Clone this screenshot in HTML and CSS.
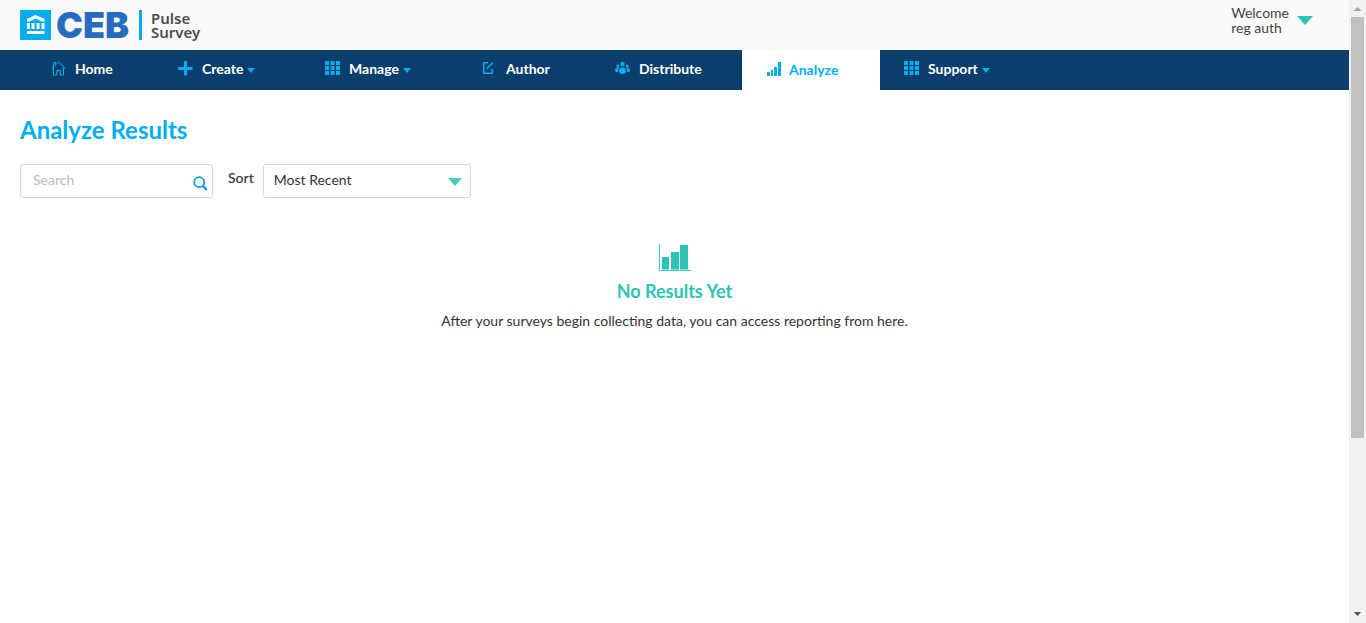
FILE: index.html
```html
<!DOCTYPE html>
<html lang="en">
<head>
<meta charset="utf-8">
<title>Pulse Survey - Analyze Results</title>
<link rel="stylesheet" href="styles.css">
</head>
<body>
<div class="page">
  <header class="topbar">
    <a class="brand" href="#">
      <svg class="brand-mark" viewBox="0 0 31 30" aria-hidden="true">
        <rect width="31" height="30" fill="#00aeef"/>
        <path d="M7 11.500V9L15.500 5 24.500 9v2.500H22L15.500 8.500 9.500 11.500z" fill="#fff"/>
        <path d="M7 13h3v6H7zM11.500 13h3v6h-3zM16.500 13h3v6h-3zM21.500 13h3v6h-3zM7 21h17.500v3H7z" fill="#fff"/>
      </svg>
      <span class="brand-name">CEB</span>
      <span class="brand-product">Pulse<br>Survey</span>
    </a>
    <button class="account" type="button">
      <span>Welcome<br>reg auth</span>
      <svg class="account-arrow" viewBox="0 0 16 9" aria-hidden="true"><path d="M0 0h16L8 9z" fill="#2bc4b6"/></svg>
    </button>
  </header>
  <nav class="nav">
    <a class="nav-item" href="#">
      <svg class="icon" viewBox="0 0 15 15" aria-hidden="true"><path d="M.7 7.500 7.500 1l6.800 6.500M2.500 6v8h3.200V9.500h3.600V14h3.200V6M2.500 5.500V1.500H4.500V3.500" fill="none" stroke="#00aeef"/></svg>
      Home</a>
    <a class="nav-item" href="#">
      <svg class="icon" viewBox="0 0 15 15" aria-hidden="true"><path d="M6 0h3v6h5.500v3H9v5.500H6V9H0V6h6z" fill="#00aeef"/></svg>
      Create<span class="caret"></span></a>
    <a class="nav-item" href="#">
      <svg class="icon" viewBox="0 0 15 15" aria-hidden="true"><path d="M0 0h4v4H0zM5.500 0h4v4h-4zM11 0h4v4h-4zM0 5h4v4H0zM5.500 5h4v4h-4zM11 5h4v4h-4zM0 10h4v4H0zM5.500 10h4v4h-4zM11 10h4v4h-4z" fill="#00aeef"/></svg>
      Manage<span class="caret"></span></a>
    <a class="nav-item" href="#">
      <svg class="icon" viewBox="0 0 15 15" aria-hidden="true"><path d="M6 1.700H1.700v10.600h8.600V7.500M5.300 8.200l.7-2 5-4.500" fill="none" stroke="#00aeef" stroke-width="1.500"/></svg>
      Author</a>
    <a class="nav-item" href="#">
      <svg class="icon" viewBox="0 0 15 15" aria-hidden="true"><g fill="#00aeef"><circle cx="7.500" cy="3" r="2.200"/><circle cx="2.800" cy="5" r="1.500"/><circle cx="12.200" cy="5" r="1.500"/><path d="M4 10c0-5 7-5 7 0 0 4-7 4-7 0zM0 9.500C0 6.500 3 6.500 4 7.300 3 8.500 3 9.500 3.300 11 1 11 0 10.800 0 9.500zM15 9.500c0-3-3-3-4-2.200 1 1.200 1 2.200.7 3.700 2.300 0 3.300-.2 3.300-1.500z"/></g></svg>
      Distribute</a>
    <a class="nav-item active" href="#" aria-current="page">
      <svg class="icon" viewBox="0 0 15 15" aria-hidden="true"><path d="M0 10h3v4H0zM4 8h2v6H4zM7 5h3v9H7zM11 0h3v14h-3z" fill="#00aeef"/></svg>
      Analyze</a>
    <a class="nav-item last" href="#">
      <svg class="icon" viewBox="0 0 15 15" aria-hidden="true"><path d="M0 0h4v4H0zM5.500 0h4v4h-4zM11 0h4v4h-4zM0 5h4v4H0zM5.500 5h4v4h-4zM11 5h4v4h-4zM0 10h4v4H0zM5.500 10h4v4h-4zM11 10h4v4h-4z" fill="#00aeef"/></svg>
      Support<span class="caret"></span></a>
  </nav>
  <main class="content">
    <h1 class="title">Analyze Results</h1>
    <form class="filters">
      <div class="search">
        <input class="search-input" type="search" placeholder="Search" aria-label="Search">
        <button class="search-button" type="button" aria-label="Search">
          <svg viewBox="0 0 15 15" aria-hidden="true"><circle cx="6.200" cy="6.200" r="5" fill="none" stroke="#0a9fe6" stroke-width="1.800"/><path d="m9.800 9.800 4 4" stroke="#0a9fe6" stroke-width="2.400"/></svg>
        </button>
      </div>
      <label class="sort-label" for="sort">Sort</label>
      <div class="sort">
        <select class="sort-select" id="sort"><option>Most Recent</option></select>
        <svg class="sort-arrow" viewBox="0 0 14 8" aria-hidden="true"><path d="M0 0h14L7 8z" fill="#47cbbf"/></svg>
      </div>
    </form>
    <section class="empty">
      <svg class="empty-icon" viewBox="0 0 32 27" aria-hidden="true"><path d="M.5 0v26.500H32" fill="none" stroke="#45c8bc"/><path d="M3 13h7v12.500H3zM12 8h8v17.500h-8zM21 1h8v24.500h-8z" fill="#2bc4b6"/></svg>
      <h2 class="empty-title">No Results Yet</h2>
      <p class="empty-text">After your surveys begin collecting data, you can access reporting from here.</p>
    </section>
  </main>
</div>
<div class="scrollbar" aria-hidden="true">
  <svg class="scroll-arrow" viewBox="0 0 17 17"><path d="M4.500 11h8l-4-4z" fill="#a3a3a3"/></svg>
  <div class="scroll-track"><div class="scroll-thumb"></div></div>
  <svg class="scroll-arrow" viewBox="0 0 17 17"><path d="M5 6h7l-3.500 4z" fill="#505050"/></svg>
</div>
</body>
</html>
```
FILE: styles.css
```css
* { box-sizing: border-box; }

body {
  margin: 0;
  min-height: 100vh;
  display: flex;
  background: #fff;
  color: #333;
  font: 14px/20px Lato, "Open Sans", sans-serif;
}

a { color: inherit; text-decoration: none; }
button, input, select { font: inherit; color: inherit; }
button { border: 0; padding: 0; background: none; cursor: pointer; }
svg { display: block; }

.page { flex: 1; min-width: 0; }

.topbar {
  display: flex;
  justify-content: space-between;
  height: 50px;
  padding: 0 36px 0 20px;
  background: #fafafa;
}

.brand { display: flex; align-items: center; }
.brand-mark { width: 31px; height: 30px; margin-right: 5px; }
.brand-name {
  color: #286cbf;
  font: 900 36px/30px Inter, sans-serif;
}
.brand-product {
  margin-left: 10px;
  padding: 1px 0 1px 9px;
  border-left: 3px solid #00aeef;
  color: #4d4d4f;
  font: 600 15px/14px "Noto Sans", sans-serif;
}

.account {
  display: flex;
  align-items: flex-start;
  gap: 8px;
  padding-top: 5px;
  color: #444;
  line-height: 15px;
  text-align: left;
}
.account-arrow { width: 16px; height: 9px; margin-top: 11px; }

.nav {
  display: grid;
  grid-template-columns: 127px 147px 157px 133px 152px 138px 1fr;
  height: 40px;
  padding-left: 26px;
  padding-right: 0;
  background: #0a3f6b;
  color: #fff;
  font-weight: 700;
}
.nav-item {
  display: flex;
  align-items: center;
  padding: 0 0 2px 25px;
}
.nav-item.active { background: #fff; color: #00aeef; padding-bottom: 0; }
.nav-item.last { padding-left: 24px; }
.icon { width: 15px; height: 15px; margin: 0 9px 2px 0; }
.active .icon { margin: 0 7px 2px 0; }
.caret {
  margin: 3px 0 0 4px;
  border: 4px solid transparent;
  border-top: 5px solid #00aeef;
  border-bottom: 0;
}

.content { padding: 24px 20px; }
.title {
  margin: 0 0 18px;
  color: #00aeef;
  font-size: 24px;
  line-height: 32px;
}

.filters { display: flex; }
.search { position: relative; width: 193px; }
.search-input {
  width: 100%;
  height: 34px;
  padding: 0 36px 3px 12px;
  border: 1px solid #d8d8d8;
  border-radius: 3px;
  background: #fff;
  appearance: none;
}
.search-input::placeholder { color: #bbb; }
.search-button { position: absolute; top: 12px; right: 5px; width: 15px; height: 15px; }
.sort-label { margin: 4px 9px 0 15px; font-weight: 500; }
.sort { position: relative; width: 208px; }
.sort-select {
  width: 100%;
  height: 34px;
  padding: 0 30px 2px 10px;
  border: 1px solid #d8d8d8;
  border-radius: 3px;
  background: #fff;
  appearance: none;
}
.sort-arrow { position: absolute; top: 14px; right: 9px; width: 14px; height: 8px; pointer-events: none; }

.empty {
  display: flex;
  flex-direction: column;
  align-items: center;
  padding-top: 46px;
  text-align: center;
}
.empty-icon { width: 32px; height: 27px; }
.empty-title {
  margin: 8px 0;
  color: #2bc4b6;
  font-size: 18px;
  line-height: 24px;
}
.empty-text { margin: 0; }

.scrollbar {
  display: flex;
  flex-direction: column;
  width: 17px;
  background: #f1f1f1;
}
.scroll-arrow { width: 17px; height: 17px; }
.scroll-track { flex: 1; padding: 0 2px; }
.scroll-thumb { height: 71.500%; background: #c1c1c1; }
```
